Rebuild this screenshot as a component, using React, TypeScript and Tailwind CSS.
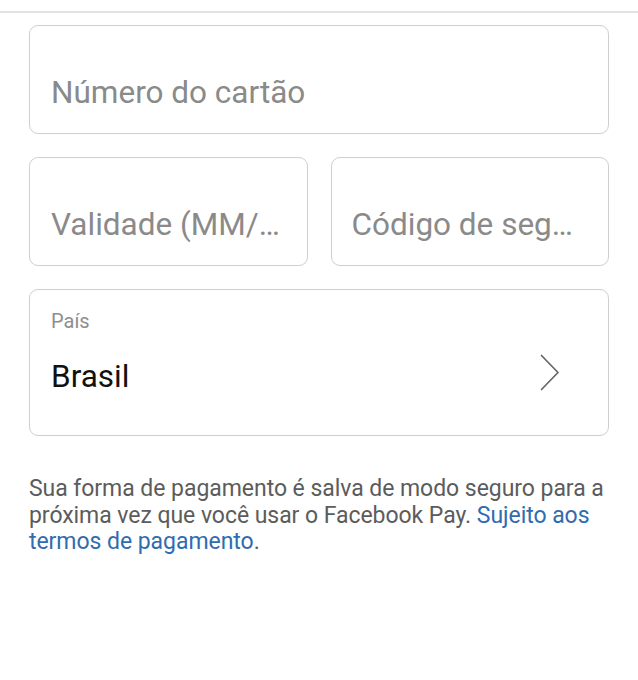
export default function App() {
  return (
    <div className="w-[638px] h-[680px] bg-white font-['Roboto',sans-serif] overflow-hidden">
      <div className="h-[11px]" />
      <div className="h-[2px] bg-[#e2e2e2]" />
      <div className="px-[29px] pt-[12px] flex flex-col gap-[23px]">
        <div className="h-[109px] rounded-[9px] border border-[#cfcfcf] flex items-end pb-[22px] px-[21px]">
          <span className="text-[31.5px] leading-[36px] text-[#8a8a8a] truncate">Número do cartão</span>
        </div>
        <div className="grid grid-cols-2 gap-[23px]">
          <div className="h-[109px] rounded-[9px] border border-[#cfcfcf] flex items-end pb-[22px] pl-[21px] pr-[22px] min-w-0">
            <span className="text-[31.5px] leading-[36px] text-[#8a8a8a] truncate">Validade (MM/AA)</span>
          </div>
          <div className="h-[109px] rounded-[9px] border border-[#cfcfcf] flex items-end pb-[22px] pl-[20px] pr-[24px] min-w-0">
            <span className="text-[31.5px] leading-[36px] text-[#8a8a8a] truncate">Código de segurança</span>
          </div>
        </div>
        <div className="h-[147px] rounded-[9px] border border-[#cfcfcf] flex flex-col pt-[19px] pl-[21px] pr-[48px]">
          <span className="text-[20px] leading-[24px] text-[#8e8e8e]">País</span>
          <div className="mt-[26px] flex items-start justify-between">
            <span className="text-[31.5px] leading-[36px] text-[#111]">Brasil</span>
            <svg width="20" height="37" viewBox="0 0 20 37" className="-mt-[5px]" fill="none">
              <polyline points="1.5,1.5 18,18.5 1.5,35.5" stroke="#666" strokeWidth="1.7" strokeLinecap="round" strokeLinejoin="round" />
            </svg>
          </div>
        </div>
      </div>
      <p className="pl-[29px] pr-[22px] mt-[40px] text-[23px] tracking-[-0.05px] leading-[26.5px] text-[#5c5c5c]">
        Sua forma de pagamento é salva de modo seguro para a próxima vez que você usar o Facebook Pay.{' '}
        <span className="text-[#2f6cb0]">Sujeito aos termos de pagamento</span>.
      </p>
    </div>
  );
}
